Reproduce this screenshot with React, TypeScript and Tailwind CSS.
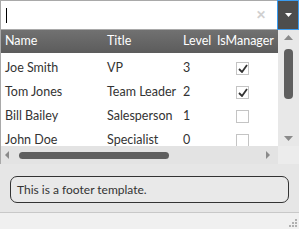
import React from 'react';

interface Person {
  name: string;
  title: string;
  level: number;
  isManager: boolean;
}

const people: Person[] = [
  { name: 'Joe Smith', title: 'VP', level: 3, isManager: true },
  { name: 'Tom Jones', title: 'Team Leader', level: 2, isManager: true },
  { name: 'Bill Bailey', title: 'Salesperson', level: 1, isManager: false },
  { name: 'John Doe', title: 'Specialist', level: 0, isManager: false },
];

function CheckBox({ checked }: { checked: boolean }) {
  return (
    <div className="w-[13px] h-[13px] border border-[#c4c4c4] bg-white flex items-center justify-center">
      {checked && (
        <svg width="10" height="9" viewBox="0 0 10 9">
          <path d="M1 5 L4 8 L9 1" fill="none" stroke="#333" strokeWidth="1.8" />
        </svg>
      )}
    </div>
  );
}

export default function App() {
  return (
    <div
      className="w-[299px] h-[229px] bg-[#f0f0f0] flex flex-col overflow-hidden text-[12px]"
      style={{ fontFamily: 'Lato, "Open Sans", sans-serif' }}
    >
      {/* combo input */}
      <div className="h-[30px] flex shrink-0">
        <div className="flex-1 bg-white border border-[#a9a9a9] border-r-0 flex items-center pl-[5px] pr-[11px]">
          <div className="w-px h-[15px] bg-black" />
          <div className="flex-1" />
          <span className="text-[#d0d0d0] text-[12px] font-bold leading-none">✕</span>
        </div>
        <div className="w-[22px] bg-[#4d4d4d] border border-[#3a9bef] flex items-center justify-center">
          <svg width="7" height="4" viewBox="0 0 7 4">
            <path d="M0 0 L7 0 L3.5 4 Z" fill="#fff" />
          </svg>
        </div>
      </div>

      {/* grid */}
      <div className="h-[134px] shrink-0 grid grid-cols-[1fr_21px] grid-rows-[1fr_18px] border-l border-[#a9a9a9]">
        <div className="flex flex-col overflow-hidden bg-white">
          <div className="h-[23px] shrink-0 bg-gradient-to-b from-[#717171] to-[#5c5c5c] text-white text-[12.5px] flex items-center">
            <div className="w-[103px] pl-[4px]">Name</div>
            <div className="w-[76px] pl-[3px]">Title</div>
            <div className="w-[36px] pl-[3px]">Level</div>
            <div className="pl-[1px]">IsManager</div>
          </div>
          <div className="pt-[3px] flex flex-col text-[12.5px]">
            {people.map((p) => (
              <div key={p.name} className="h-[24px] shrink-0 flex items-center text-[#333]">
                <div className="w-[103px] pl-[4px] truncate">{p.name}</div>
                <div className="w-[76px] pl-[3px] whitespace-nowrap">{p.title}</div>
                <div className="w-[36px] pl-[3px]">{p.level}</div>
                <div className="pl-[20px]">
                  <CheckBox checked={p.isManager} />
                </div>
              </div>
            ))}
          </div>
        </div>

        {/* vertical scrollbar */}
        <div className="bg-[#e8e8e8] flex flex-col items-center pt-[5px] pb-[5px]">
          <svg width="9" height="5" viewBox="0 0 9 5">
            <path d="M4.5 0 L9 5 L0 5 Z" fill="#8a8a8a" />
          </svg>
          <div className="w-[9px] h-[50px] mt-[9px] rounded-[4px] bg-[#5f5f5f]" />
          <div className="flex-1" />
          <svg width="9" height="5" viewBox="0 0 9 5">
            <path d="M0 0 L9 0 L4.5 5 Z" fill="#8a8a8a" />
          </svg>
        </div>

        {/* horizontal scrollbar */}
        <div className="bg-[#e3e3e3] flex items-center pl-[4px] pr-[8px]">
          <svg width="4" height="8" viewBox="0 0 4 8">
            <path d="M4 0 L4 8 L0 4 Z" fill="#8a8a8a" />
          </svg>
          <div className="w-[150px] h-[7px] ml-[10px] rounded-[4px] bg-[#5f5f5f]" />
          <div className="flex-1" />
          <svg width="4" height="8" viewBox="0 0 4 8">
            <path d="M0 0 L4 4 L0 8 Z" fill="#8a8a8a" />
          </svg>
        </div>
        <div className="bg-[#ececec]" />
      </div>

      {/* footer */}
      <div className="h-[49px] shrink-0 bg-[#e6e6e6] border-b border-[#c8c8c8] px-[10px] pt-[12px]">
        <div className="h-[27px] border border-[#333] rounded-[7px] flex items-center pl-[6px] text-[#333] bg-[#e9e9e9]">
          This is a footer template.
        </div>
      </div>

      {/* resize grip */}
      <div className="flex-1 flex justify-end items-end pr-[2px] pb-[2px]">
        <svg width="8" height="8" viewBox="0 0 8 8">
          <rect x="6" y="0" width="2" height="2" fill="#b0b0b0" />
          <rect x="3" y="3" width="2" height="2" fill="#b0b0b0" />
          <rect x="6" y="3" width="2" height="2" fill="#b0b0b0" />
          <rect x="0" y="6" width="2" height="2" fill="#b0b0b0" />
          <rect x="3" y="6" width="2" height="2" fill="#b0b0b0" />
          <rect x="6" y="6" width="2" height="2" fill="#b0b0b0" />
        </svg>
      </div>
    </div>
  );
}
